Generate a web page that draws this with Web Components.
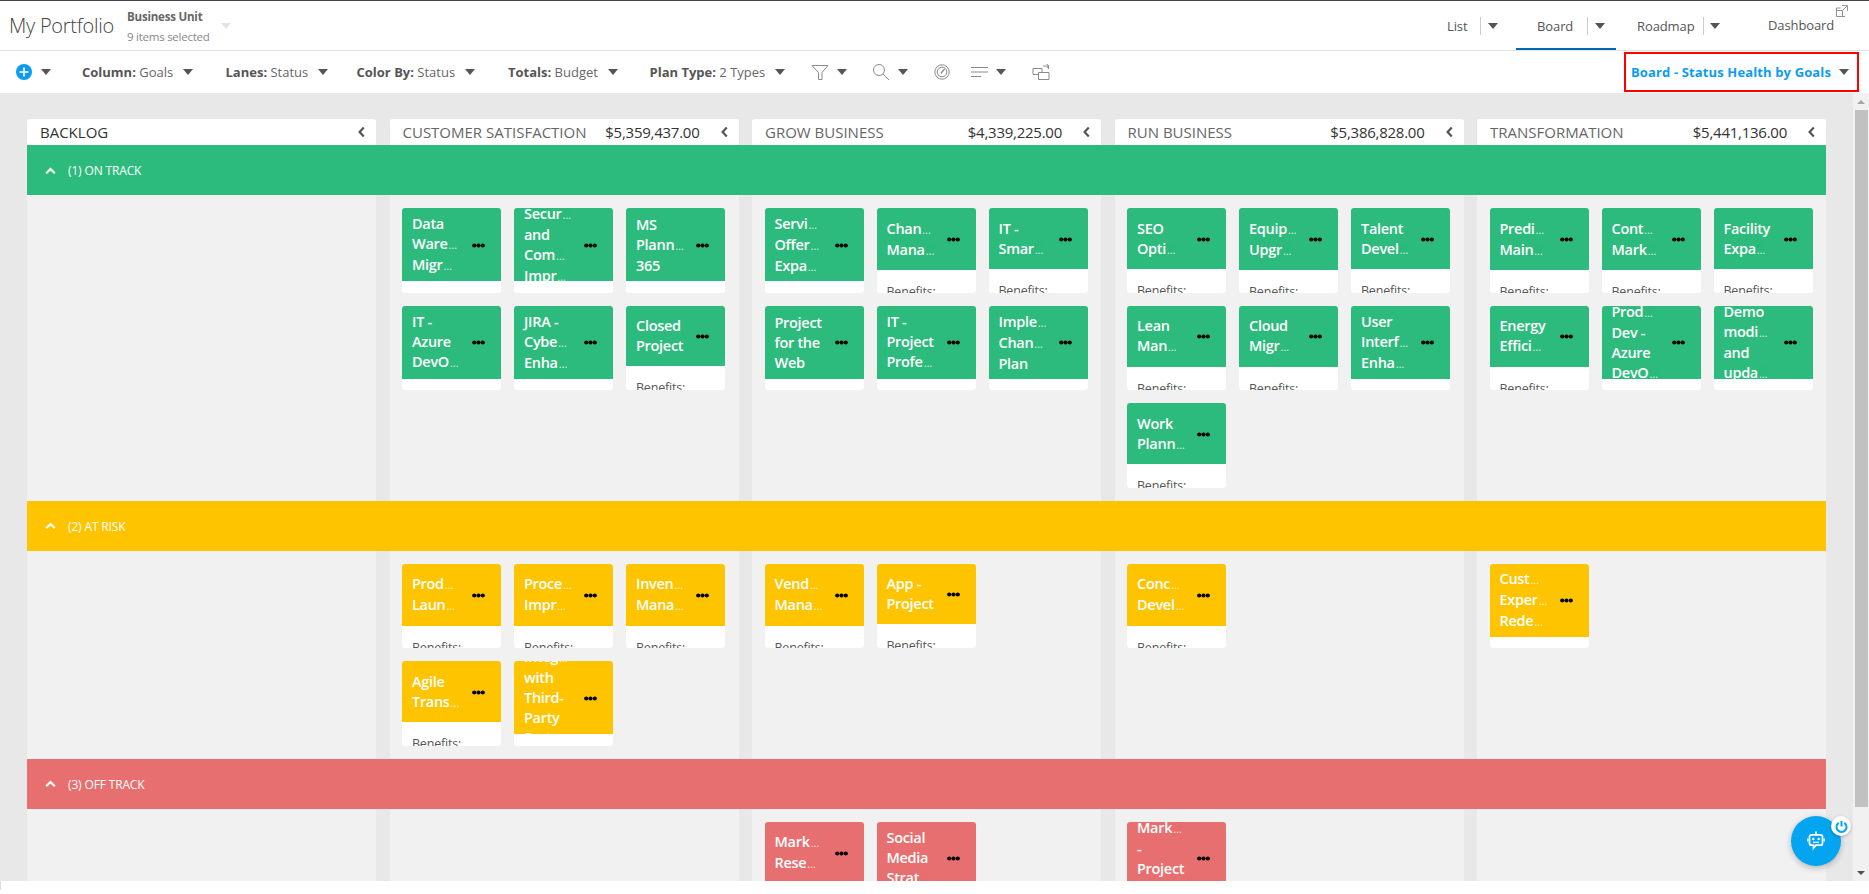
<!DOCTYPE html>
<html><head><meta charset="utf-8"><title>My Portfolio</title>
<style>
html,body{margin:0;padding:0;height:100%;overflow:hidden;background:#fff;font-family:"Open Sans","Noto Sans",sans-serif}
</style></head><body>
<pf-app></pf-app>
<script>
const caret=(c='#555')=>`<span style="display:inline-block;flex:none;width:0;height:0;border-left:5px solid transparent;border-right:5px solid transparent;border-top:6px solid ${c}"></span>`;

class PfCard extends HTMLElement{
  connectedCallback(){
    const r=this.attachShadow({mode:'open'});
    const lines=(this.getAttribute('t')||'').split('|').map(l=>{
      const tr=l.endsWith('~');return `<div class="l">${tr?l.slice(0,-1)+'<i>…</i>':l}</div>`;}).join('');
    r.innerHTML=`<style>
    :host{display:block;width:99px;height:84.5px;background:#fff;border-radius:3px;overflow:hidden}
    .top{display:flex;align-items:center;box-sizing:border-box;max-height:73px;padding:10.5px 16px 9.5px 10px;background:var(--c);overflow:hidden}
    .tx{flex:1;min-width:0;color:#fff;font:600 14.5px/20px "Open Sans",sans-serif;letter-spacing:-.3px}
    .l{white-space:nowrap}
    i{font:400 11px/20px "Open Sans",sans-serif;letter-spacing:-.5px;color:#fff;opacity:.8;margin-left:1px}
    svg{flex:none;display:block}
    .b{padding:12px 10px 0;font:12.5px/20px "Open Sans",sans-serif;letter-spacing:-.2px;color:#555}
    </style><div class="top"><div class="tx">${lines}</div><svg width="13" height="5" viewBox="0 0 13 5"><circle cx="2.2" cy="2.5" r="2.1"/><circle cx="6.5" cy="2.5" r="2.1"/><circle cx="10.8" cy="2.5" r="2.1"/></svg></div><div class="b">Benefits:</div>`;
  }
}
customElements.define('pf-card',PfCard);

class PfColHead extends HTMLElement{
  connectedCallback(){
    const r=this.attachShadow({mode:'open'});
    const a=this.getAttribute('amount')||'';
    r.innerHTML=`<style>
    :host{display:flex;align-items:center;height:26px;box-sizing:border-box;background:#fff;border-radius:3px 3px 0 0;padding:1px 10px 0 13px;font:15px/25px "Open Sans",sans-serif;color:#666}
    .n{flex:1;white-space:nowrap}
    .n.d{color:#333}
    .a{color:#333;margin-right:20px;white-space:nowrap;letter-spacing:-.25px}
    svg{display:block;flex:none;margin-top:-1px}
    </style><span class="n ${a?'':'d'}">${this.getAttribute('name')}</span>${a?`<span class="a">${a}</span>`:''}<svg width="9" height="12" viewBox="0 0 9 12"><path d="M6.8 1.5 2.6 6l4.2 4.5" fill="none" stroke="#555" stroke-width="2.2"/></svg>`;
  }
}
customElements.define('pf-col-head',PfColHead);

class PfLane extends HTMLElement{
  connectedCallback(){
    const r=this.attachShadow({mode:'open'});
    const cols=JSON.parse(this.getAttribute('cols'));
    r.innerHTML=`<style>
    :host{display:block;--c:${this.getAttribute('color')}}
    .h{display:flex;align-items:center;gap:12px;height:50px;box-sizing:border-box;padding-top:1px;background:var(--c);padding-left:18px;color:#fff;font:400 12px/49px "Open Sans",sans-serif;letter-spacing:-.15px}
    .b{display:grid;grid-template-columns:repeat(5,349px);column-gap:13.5px}
    .c{background:#f1f1f1;padding:13px 12.5px;display:grid;grid-template-columns:repeat(3,99px);grid-auto-rows:84.5px;gap:13px;align-content:start;min-height:84.5px}
    svg{display:block}
    </style><div class="h"><svg width="11" height="8" viewBox="0 0 11 8"><path d="M1.2 6.3 5.5 2l4.3 4.3" fill="none" stroke="#fff" stroke-width="2.2"/></svg><span>${this.getAttribute('label')}</span></div>
    <div class="b">${cols.map(c=>`<div class="c">${c.map(t=>`<pf-card t="${t}"></pf-card>`).join('')}</div>`).join('')}</div>`;
  }
}
customElements.define('pf-lane',PfLane);

class PfBoard extends HTMLElement{
  connectedCallback(){
    const r=this.attachShadow({mode:'open'});
    const lanes=[
     {label:'(1) ON TRACK',color:'#2cbb7d',cols:[[],
      ['Data|Ware~|Migr~','Secur~|and|Com~|Impr~','MS|Plann~|365','IT -|Azure|DevO~','JIRA -|Cybe~|Enha~','Closed|Project'],
      ['Servi~|Offer~|Expa~','Chan~|Mana~','IT -|Smar~','Project|for the|Web','IT -|Project|Profe~','Imple~|Chan~|Plan'],
      ['SEO|Opti~','Equip~|Upgr~','Talent|Devel~','Lean|Man~','Cloud|Migr~','User|Interf~|Enha~','Work|Plann~'],
      ['Predi~|Main~','Cont~|Mark~','Facility|Expa~','Energy|Effici~','Prod~|Dev -|Azure|DevO~','Demo|modi~|and|upda~']]},
     {label:'(2) AT RISK',color:'#ffc400',cols:[[],
      ['Prod~|Laun~','Proce~|Impr~','Inven~|Mana~','Agile|Trans~','Integ~|with|Third-|Party|Syst~'],
      ['Vend~|Mana~','App -|Project'],
      ['Conc~|Devel~'],
      ['Cust~|Exper~|Rede~']]},
     {label:'(3) OFF TRACK',color:'#e76f6f',cols:[[],[],
      ['Mark~|Rese~','Social|Media|Strat~'],
      ['Mark~|-|Project|Mana~'],[]]}
    ];
    r.innerHTML=`<style>
    :host{display:block;flex:1;min-width:0;background:#e8e8e8;padding:26px 27px 0;overflow:hidden;box-sizing:border-box}
    .hd{display:grid;grid-template-columns:repeat(5,349px);column-gap:13.5px}
    </style><div class="hd">
      <pf-col-head name="BACKLOG"></pf-col-head>
      <pf-col-head name="CUSTOMER SATISFACTION" amount="$5,359,437.00"></pf-col-head>
      <pf-col-head name="GROW BUSINESS" amount="$4,339,225.00"></pf-col-head>
      <pf-col-head name="RUN BUSINESS" amount="$5,386,828.00"></pf-col-head>
      <pf-col-head name="TRANSFORMATION" amount="$5,441,136.00"></pf-col-head>
    </div>${lanes.map(l=>`<pf-lane label="${l.label}" color="${l.color}" cols='${JSON.stringify(l.cols)}'></pf-lane>`).join('')}`;
  }
}
customElements.define('pf-board',PfBoard);

class PfScrollbar extends HTMLElement{
  connectedCallback(){
    this.attachShadow({mode:'open'}).innerHTML=`<style>
    :host{display:flex;flex-direction:column;align-items:center;width:16px;flex:none;background:#f1f1f1}
    .u,.d{height:17px;display:flex;align-items:center;justify-content:center;flex:none}
    .u i{border-left:4px solid transparent;border-right:4px solid transparent;border-bottom:4px solid #a3a3a3}
    .d i{border-left:4px solid transparent;border-right:4px solid transparent;border-top:4px solid #505050}
    .t{width:13px;height:697px;background:#c1c1c1;flex:none}
    .s{flex:1}
    </style><div class="u"><i></i></div><div class="t"></div><div class="s"></div><div class="d"><i></i></div>`;
  }
}
customElements.define('pf-scrollbar',PfScrollbar);

class PfTool extends HTMLElement{
  connectedCallback(){
    const k=this.getAttribute('k'),v=this.getAttribute('v');
    this.attachShadow({mode:'open'}).innerHTML=`<style>
    :host{display:flex;align-items:center;flex:none;gap:${k?10:8}px;font:13px/20px "Open Sans",sans-serif;color:#666;white-space:nowrap}
    b{font-weight:700;color:#555}
    </style>${k?`<span><b>${k}:</b> ${v}</span>`:''}<slot></slot>${caret()}`;
  }
}
customElements.define('pf-tool',PfTool);

class PfToolbar extends HTMLElement{
  connectedCallback(){
    const s='fill="none" stroke="#8a8a8a" stroke-width="1"';
    this.attachShadow({mode:'open'}).innerHTML=`<style>
    :host{display:flex;align-items:center;height:42px;background:#fff;padding-left:16px;box-sizing:border-box;flex:none;position:relative}
    svg{display:block;flex:none}
    .gauge{width:39px;flex:none;padding-left:1.5px;box-sizing:border-box}
    .view{margin-left:auto;margin-right:10.5px;width:234.5px;height:40.5px;box-sizing:border-box;border:2.5px solid #f00;display:flex;align-items:center;padding-left:5px;gap:8px;font:700 13px/20px "Open Sans",sans-serif;letter-spacing:.13px;color:#0b9cf0;white-space:nowrap}
    .view span{flex:1}
    .view::after{content:"";margin-right:8px;border-left:5px solid transparent;border-right:5px solid transparent;border-top:6px solid #555}
    </style>
    <pf-tool style="width:66px;gap:9px"><svg width="16" height="16" viewBox="0 0 16 16"><circle cx="8" cy="8" r="8" fill="#0b9cf0"/><path d="M8 3.500v9M3.500 8h9" stroke="#fff" stroke-width="1.600"/></svg></pf-tool>
    <pf-tool k="Column" v="Goals" style="width:143.5px"></pf-tool>
    <pf-tool k="Lanes" v="Status" style="width:131px"></pf-tool>
    <pf-tool k="Color By" v="Status" style="width:151.5px"></pf-tool>
    <pf-tool k="Totals" v="Budget" style="width:141.5px"></pf-tool>
    <pf-tool k="Plan Type" v="2 Types" style="width:161.500px"></pf-tool>
    <pf-tool style="width:61px"><svg width="18" height="17" viewBox="0 0 18 17"><path d="M1 1.500h16L11 8.500V15.500L7.500 15.500V8.500Z" ${s}/></svg></pf-tool>
    <pf-tool style="width:60px"><svg width="18" height="18" viewBox="0 0 18 18"><circle cx="7" cy="7" r="5.500" ${s}/><path d="M11 11l6 6" ${s}/></svg></pf-tool>
    <div class="gauge"><svg width="16" height="16" viewBox="0 0 16 16"><circle cx="8" cy="8" r="7.200" ${s}/><circle cx="8" cy="8" r="4.800" ${s}/><path d="M6.800 9.500 10.500 5" stroke="#8a8a8a" stroke-width="1.200"/></svg></div>
    <pf-tool style="width:61px"><svg width="17" height="12" viewBox="0 0 17 12"><path d="M0 1.500h17M0 6h17M0 10.500h10" ${s}/></svg></pf-tool>
    <svg width="18" height="18" viewBox="0 0 18 18"><path d="M1 5.500h9v4M1 5.500v6h5.500" ${s}/><path d="M6.500 9.500h10.500v7h-10.500z" ${s}/><path d="M11 3h5.500v3M14.800 1l1.800 2-1.800 2" ${s}/></svg>
    <div class="view"><span>Board - Status Health by Goals</span></div>`;
  }
}
customElements.define('pf-toolbar',PfToolbar);

class PfHeader extends HTMLElement{
  connectedCallback(){
    this.attachShadow({mode:'open'}).innerHTML=`<style>
    :host{display:flex;align-items:stretch;height:51px;box-sizing:border-box;background:#fff;border-top:1px solid #444;border-bottom:1px solid #e2e2e2;flex:none;position:relative;font-family:"Open Sans",sans-serif}
    .t{font:300 20px/50px "Open Sans",sans-serif;letter-spacing:-.25px;color:#444;margin-left:9px;width:118px;white-space:nowrap}
    .bu{width:94px;padding-top:8px;white-space:nowrap}
    .bu b{display:block;font:700 11.5px/16px "Open Sans",sans-serif;letter-spacing:-.2px;color:#666}
    .bu span{display:block;font:400 11.5px/16px "Open Sans",sans-serif;letter-spacing:-.25px;color:#888;margin-top:4px}
    .dd{align-self:center;border-left:5px solid transparent;border-right:5px solid transparent;border-top:6px solid #e3e3e3}
    nav{margin-left:auto;display:flex;font:13px/49px "Open Sans",sans-serif;color:#555;letter-spacing:-.1px}
    .tab{display:flex;align-items:center;padding:3px 0 0 21px;box-sizing:border-box;white-space:nowrap;border-bottom:2px solid transparent;position:relative}
    .tab.on{border-bottom-color:#0067b0}
    .sep{width:1px;height:18px;background:#ccc;margin-right:6.5px;flex:none}
    .d{padding-left:21px;width:122px;box-sizing:border-box}
    svg{position:absolute;right:21px;top:4px}
    </style><div class="t">My Portfolio</div>
    <div class="bu"><b>Business Unit</b><span>9 items selected</span></div><div class="dd"></div>
    <nav>
      <div class="tab" style="width:90px">List<span class="sep" style="margin-left:12.500px"></span>${caret()}</div>
      <div class="tab on" style="width:100px">Board<span class="sep" style="margin-left:14px"></span>${caret()}</div>
      <div class="tab" style="width:131px">Roadmap<span class="sep" style="margin-left:8px"></span>${caret()}</div>
      <div class="d">Dashboard</div>
    </nav>
    <svg width="12" height="12" viewBox="0 0 12 12"><path d="M.5 3v8.500h8.500M.5 3h4M.5 5.500h6v6" fill="none" stroke="#8f8f8f"/><path d="M6 .5h5.500V6M11.300.7 6.500 5.500" fill="none" stroke="#9a9a9a"/></svg>`;
  }
}
customElements.define('pf-header',PfHeader);

class PfBot extends HTMLElement{
  connectedCallback(){
    this.attachShadow({mode:'open'}).innerHTML=`<style>
    :host{position:absolute;left:1791px;top:816px;width:50px;height:50px;border-radius:50%;background:#03a5f0;box-shadow:0 2px 6px rgba(0,0,0,.25);display:flex;align-items:center;justify-content:center}
    .p{position:absolute;left:40px;top:0;width:20px;height:20px;border-radius:50%;background:#fff;box-shadow:0 1px 3px rgba(0,0,0,.25);display:flex;align-items:center;justify-content:center}
    svg{display:block}
    </style><svg width="18" height="20" viewBox="0 0 18 20" fill="none" stroke="#fff"><path d="M9 .5v3" stroke-width="1.400"/><circle cx="9" cy="1.500" r="1.100" fill="#fff" stroke="none"/><path d="M4.500 3.800h9a2 2 0 0 1 2 2v6.400a2 2 0 0 1-2 2H9l-2.500 3v-3h-2a2 2 0 0 1-2-2V5.800a2 2 0 0 1 2-2z" stroke-width="1.700"/><path d="M.7 7.500v3M17.300 7.500v3" stroke-width="1.500"/><circle cx="6.300" cy="8" r="1.200" fill="#fff" stroke="none"/><circle cx="11.700" cy="8" r="1.200" fill="#fff" stroke="none"/><path d="M6 11.300h6" stroke-width="1.200"/></svg>
    <div class="p"><svg width="13" height="13" viewBox="0 0 13 13" fill="none" stroke="#03a5f0" stroke-width="2"><path d="M6.500 1v5.500"/><path d="M3.700 2.800a5 5 0 1 0 5.600 0"/></svg></div>`;
  }
}
customElements.define('pf-bot',PfBot);

class PfApp extends HTMLElement{
  connectedCallback(){
    this.attachShadow({mode:'open'}).innerHTML=`<style>
    :host{display:flex;flex-direction:column;width:1869px;height:894px;position:relative;overflow:hidden;background:#fff}
    .m{display:flex;height:788px;flex:none;background:#e8e8e8}
    .f{flex:none;background:#fff;border-left:1px solid #ddd;box-sizing:border-box;height:9px}
    </style><pf-header></pf-header><pf-toolbar></pf-toolbar><div class="m"><pf-board></pf-board><pf-scrollbar></pf-scrollbar></div><div class="f"></div><pf-bot></pf-bot>`;
  }
}
customElements.define('pf-app',PfApp);
</script></body></html>
